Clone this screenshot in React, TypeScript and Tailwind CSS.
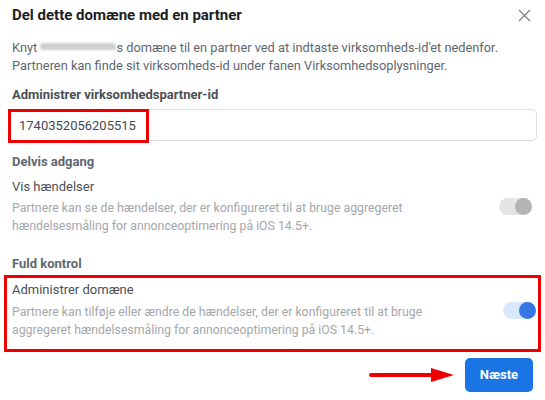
import React, { useState } from "react";

function Toggle({ on, blue }: { on: boolean; blue?: boolean }) {
  return (
    <div
      className={`relative h-[17px] w-[33px] shrink-0 rounded-full ${
        blue ? "bg-[#dbe7fb]" : "bg-[#e4e4e4]"
      }`}
    >
      <div
        className={`absolute top-0 h-[17px] w-[17px] rounded-full ${
          on ? "right-0" : "left-0"
        } ${blue ? "bg-[#3578e5]" : "bg-[#b4b4b4]"}`}
      />
    </div>
  );
}

export default function App() {
  const [partnerId, setPartnerId] = useState("1740352056205515");

  return (
    <div className="h-[400px] w-[545px] overflow-hidden bg-white font-['Roboto',sans-serif] text-[13px]">
      <div className="flex items-center justify-between pl-3 pr-[12px] pt-[5px]">
        <h1 className="text-[15px] font-bold leading-[20px] text-[#1c1e21]">
          Del dette domæne med en partner
        </h1>
        <svg width="13" height="13" viewBox="0 0 13 13" className="mr-[2px]">
          <path d="M1 1 L12 12 M12 1 L1 12" stroke="#7d8288" strokeWidth="1.3" />
        </svg>
      </div>

      <p className="mt-[14px] px-3 text-[12.8px] leading-[18px] text-[#606770]">
        Knyt{" "}
        <span className="inline-block h-[7px] w-[76px] translate-y-[-2px] rounded-full bg-[#cfcfcf] blur-[1px] align-middle" />
        s domæne til en partner ved at indtaste virksomheds-id'et nedenfor.
        <br />
        Partneren kan finde sit virksomheds-id under fanen Virksomhedsoplysninger.
      </p>

      <div className="mt-[11px] px-3 font-bold leading-[18px] text-[#4b4f56]">
        Administrer virksomhedspartner-id
      </div>

      <div className="relative mx-[8px] mt-[5px] h-[32px] rounded-[5px] border border-[#dadde1]">
        <input
          value={partnerId}
          onChange={(e) => setPartnerId(e.target.value)}
          className="h-full w-full bg-transparent pl-[10px] text-[13px] text-[#444950] outline-none"
        />
        <div className="pointer-events-none absolute left-[-1px] top-[-1px] h-[34px] w-[141px] border-[3px] border-[#ee0000]" />
      </div>

      <div className="mt-[12px] px-3 font-bold leading-[18px] text-[#606770]">Delvis adgang</div>

      <div className="mt-[7px] flex items-center justify-between pl-3 pr-[13px]">
        <div>
          <div className="leading-[18px] text-[#4b4f56]">Vis hændelser</div>
          <div className="mt-[3px] w-[420px] text-[12.3px] leading-[18px] text-[#a4a7ab]">
            Partnere kan se de hændelser, der er konfigureret til at bruge aggregeret hændelsesmåling
            for annonceoptimering på iOS 14.5+.
          </div>
        </div>
        <Toggle on />
      </div>

      <div className="mt-[20px] px-3 font-bold leading-[18px] text-[#606770]">Fuld kontrol</div>

      <div className="mx-[4px] mt-[2px] flex items-center justify-between border-[3px] border-[#ee0000] pb-[10px] pl-[5px] pr-[2px] pt-[3px]">
        <div>
          <div className="leading-[18px] text-[#4b4f56]">Administrer domæne</div>
          <div className="mt-[4px] w-[420px] text-[12.3px] leading-[18px] text-[#a4a7ab]">
            Partnere kan tilføje eller ændre de hændelser, der er konfigureret til at bruge aggregeret
            hændelsesmåling for annonceoptimering på iOS 14.5+.
          </div>
        </div>
        <Toggle on blue />
      </div>

      <div className="mt-[6px] flex items-center justify-end gap-[10px] pr-[12px]">
        <svg width="86" height="16" viewBox="0 0 86 16">
          <line x1="2" y1="8" x2="66" y2="8" stroke="#ee0000" strokeWidth="4" strokeLinecap="round" />
          <polygon points="62,1 85,8 62,15" fill="#ee0000" />
        </svg>
        <button className="h-[34px] w-[68px] rounded-[5px] bg-[#1b74e4] text-[13px] font-bold text-white">
          Næste
        </button>
      </div>
    </div>
  );
}
